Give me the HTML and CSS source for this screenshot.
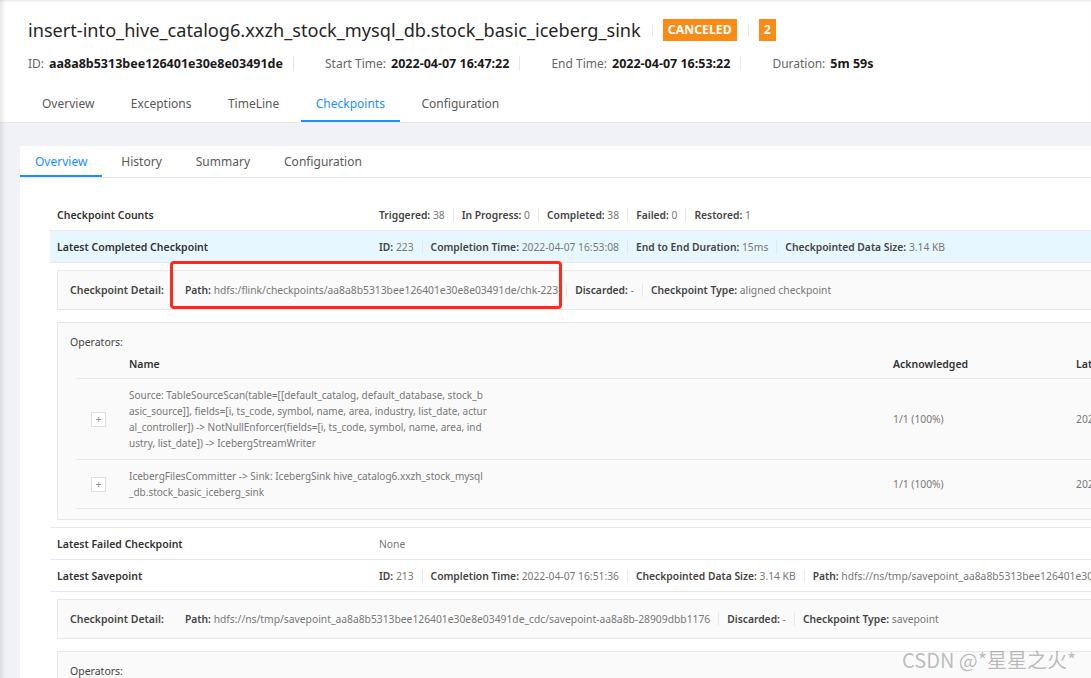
FILE: index.html
```html
<!DOCTYPE html>
<html lang="en">
<head>
    <meta charset="UTF-8">
    <title>Flink Job - Checkpoints</title>
    <link rel="stylesheet" href="styles.css">
</head>
<body>

<div class="layout">
    <header class="job-header">
        <div class="job-title">
            <h1>insert-into_hive_catalog6.xxzh_stock_mysql_db.stock_basic_iceberg_sink</h1>
            <span class="title-sep"></span>
            <span class="badge">CANCELED</span>
            <span class="title-sep"></span>
            <span class="badge">2</span>
        </div>
        <div class="job-meta">
            <div class="meta-item"><span class="meta-label">ID:</span><span class="meta-value">aa8a8b5313bee126401e30e8e03491de</span></div>
            <span class="meta-sep"></span>
            <div class="meta-item"><span class="meta-label">Start Time:</span><span class="meta-value">2022-04-07 16:47:22</span></div>
            <span class="meta-sep"></span>
            <div class="meta-item"><span class="meta-label">End Time:</span><span class="meta-value">2022-04-07 16:53:22</span></div>
            <span class="meta-sep"></span>
            <div class="meta-item"><span class="meta-label">Duration:</span><span class="meta-value">5m 59s</span></div>
        </div>
        <nav class="tabs">
            <a class="tab">Overview</a>
            <a class="tab">Exceptions</a>
            <a class="tab">TimeLine</a>
            <a class="tab active">Checkpoints</a>
            <a class="tab">Configuration</a>
        </nav>
    </header>

    <main class="content">
        <section class="card">
            <nav class="sub-tabs">
                <a class="sub-tab active">Overview</a>
                <a class="sub-tab">History</a>
                <a class="sub-tab">Summary</a>
                <a class="sub-tab">Configuration</a>
            </nav>

            <div class="card-body">
                <div class="row">
                    <div class="row-label">Checkpoint Counts</div>
                    <div class="row-value">
                        <b>Triggered:</b>&nbsp;38<span class="divider"></span>
                        <b>In Progress:</b>&nbsp;0<span class="divider"></span>
                        <b>Completed:</b>&nbsp;38<span class="divider"></span>
                        <b>Failed:</b>&nbsp;0<span class="divider"></span>
                        <b>Restored:</b>&nbsp;1
                    </div>
                </div>
                <div class="row highlight">
                    <div class="row-label">Latest Completed Checkpoint</div>
                    <div class="row-value">
                        <b>ID:</b>&nbsp;223<span class="divider"></span>
                        <b>Completion Time:</b>&nbsp;2022-04-07 16:53:08<span class="divider"></span>
                        <b>End to End Duration:</b>&nbsp;15ms<span class="divider"></span>
                        <b>Checkpointed Data Size:</b>&nbsp;3.14 KB
                    </div>
                </div>
                <div class="row expanded">
                    <div class="detail-box">
                        <span class="detail-label">Checkpoint Detail:</span>
                        <b>Path:</b>&nbsp;hdfs:/flink/checkpoints/aa8a8b5313bee126401e30e8e03491de/chk-223<span class="divider"></span>
                        <b>Discarded:</b>&nbsp;-<span class="divider"></span>
                        <b>Checkpoint Type:</b>&nbsp;aligned checkpoint
                    </div>
                    <div class="operators-box">
                        <div class="operators-title">Operators:</div>
                        <div class="op-table">
                            <div class="op-head"></div>
                            <div class="op-head">Name</div>
                            <div class="op-head">Acknowledged</div>
                            <div class="op-head">Latest Acknowledgement</div>

                            <div class="op-cell op-expand"><span class="plus">+</span></div>
                            <div class="op-cell op-name">Source: TableSourceScan(table=[[default_catalog, default_database, stock_b<br>asic_source]], fields=[i, ts_code, symbol, name, area, industry, list_date, actur<br>al_controller]) -&gt; NotNullEnforcer(fields=[i, ts_code, symbol, name, area, ind<br>ustry, list_date]) -&gt; IcebergStreamWriter</div>
                            <div class="op-cell">1/1 (100%)</div>
                            <div class="op-cell">2022-04-07 16:53:08</div>

                            <div class="op-cell op-expand"><span class="plus">+</span></div>
                            <div class="op-cell op-name">IcebergFilesCommitter -&gt; Sink: IcebergSink hive_catalog6.xxzh_stock_mysql<br>_db.stock_basic_iceberg_sink</div>
                            <div class="op-cell">1/1 (100%)</div>
                            <div class="op-cell">2022-04-07 16:53:08</div>
                        </div>
                    </div>
                </div>
                <div class="row">
                    <div class="row-label">Latest Failed Checkpoint</div>
                    <div class="row-value">None</div>
                </div>
                <div class="row">
                    <div class="row-label">Latest Savepoint</div>
                    <div class="row-value">
                        <b>ID:</b>&nbsp;213<span class="divider"></span>
                        <b>Completion Time:</b>&nbsp;2022-04-07 16:51:36<span class="divider"></span>
                        <b>Checkpointed Data Size:</b>&nbsp;3.14 KB<span class="divider"></span>
                        <b>Path:</b>&nbsp;hdfs://ns/tmp/savepoint_aa8a8b5313bee126401e30e8e03491de_cdc/savepoint-aa8a8b-28909dbb1176
                    </div>
                </div>
                <div class="row expanded">
                    <div class="detail-box">
                        <span class="detail-label">Checkpoint Detail:</span>
                        <b>Path:</b>&nbsp;hdfs://ns/tmp/savepoint_aa8a8b5313bee126401e30e8e03491de_cdc/savepoint-aa8a8b-28909dbb1176<span class="divider"></span>
                        <b>Discarded:</b>&nbsp;-<span class="divider"></span>
                        <b>Checkpoint Type:</b>&nbsp;savepoint
                    </div>
                    <div class="operators-box">
                        <div class="operators-title">Operators:</div>
                    </div>
                </div>
            </div>
        </section>
    </main>

    <div class="annotation"></div>
    <div class="watermark">CSDN @*星星之火*</div>
</div>

</body>
</html>
```

FILE: styles.css
```css
html, body {
    margin: 0;
    height: 100%;
    overflow: hidden;
}
body {
    font-family: 'Noto Sans', 'Noto Sans CJK SC', sans-serif;
    background-color: #f0f2f5;
    color: #595959;
}
.layout {
    position: relative;
    min-height: 100%;
}
.layout::before {
    content: "";
    position: absolute;
    left: 0;
    top: 0;
    bottom: 0;
    width: 6px;
    background: linear-gradient(to right, rgba(0, 0, 0, 0.09), rgba(0, 0, 0, 0));
    z-index: 5;
}

/* job header */
.job-header {
    background-color: #fff;
    padding: 16px 28px 0;
    box-shadow: inset 0 3px 3px -2px rgba(0, 0, 0, 0.1);
    border-bottom: 1px solid #e8e8e8;
}
.job-title {
    display: flex;
    align-items: center;
    height: 28px;
}
.job-title h1 {
    margin: 0;
    font-size: 18.15px;
    font-weight: 400;
    color: #262626;
    white-space: nowrap;
}
.title-sep {
    width: 1px;
    height: 12px;
    background-color: #e8e8e8;
    margin: 0 10px 0 11px;
}
.badge {
    background-color: #fa8c16;
    color: #fff;
    font-size: 12.3px;
    font-weight: 700;
    line-height: 22px;
    padding: 0 5px;
}
.job-meta {
    display: flex;
    align-items: center;
    height: 20px;
    margin-top: 9px;
    font-size: 12px;
}
.meta-label {
    color: #666;
    margin-right: 5px;
}
.meta-value {
    color: #1a1a1a;
    font-weight: 700;
    font-size: 12.5px;
}
.meta-sep {
    width: 1px;
    height: 15px;
    background-color: #e8e8e8;
    margin: 0 31px 0 10px;
}
.tabs {
    display: flex;
    height: 40px;
    margin-top: 9px;
    margin-left: -1px;
}
.tab {
    padding: 3px 15px 0;
    margin-right: 6.5px;
    line-height: 37px;
    font-size: 12px;
    color: #595959;
    border-bottom: 2px solid transparent;
    box-sizing: border-box;
}
.tab.active {
    color: #1890ff;
    border-bottom-color: #1890ff;
}

/* checkpoints card */
.content {
    padding: 23px 0 0 20px;
}
.card {
    width: 1300px;
    background-color: #fff;
}
.sub-tabs {
    display: flex;
    height: 32px;
    border-bottom: 1px solid #e8e8e8;
    box-sizing: border-box;
}
.sub-tab {
    padding: 1px 15px 0;
    margin-right: 4px;
    line-height: 30px;
    font-size: 12px;
    color: #595959;
    border-bottom: 2px solid transparent;
}
.sub-tab.active {
    color: #1890ff;
    border-bottom-color: #1890ff;
}
.card-body {
    padding: 21px 0 0 30px;
    font-size: 10.3px;
}
.row {
    display: flex;
    align-items: center;
    height: 31px;
    border-bottom: 1px solid #e8e8e8;
    white-space: nowrap;
}
.row.highlight {
    background-color: #e6f7ff;
}
.row-label {
    flex-shrink: 0;
    width: 322px;
    padding-left: 7px;
    color: #333;
    font-weight: 600;
    font-size: 10.5px;
}
.row-value {
    display: flex;
    align-items: center;
    color: #777;
}
b {
    color: #444;
    font-weight: 600;
}
.divider {
    display: inline-block;
    width: 1px;
    height: 14px;
    background-color: #e8e8e8;
    margin: 0 8px;
}
.row.expanded {
    display: block;
    height: auto;
    padding: 7px 0 7px 7px;
}
.detail-box {
    display: flex;
    align-items: center;
    height: 40px;
    padding: 0 12px;
    background-color: #fafafa;
    border: 1px solid #e8e8e8;
    box-sizing: border-box;
    color: #777;
}
.detail-label {
    width: 115px;
    color: #444;
    font-weight: 600;
    font-size: 10.5px;
}
.operators-box {
    margin-top: 12px;
    padding: 11px 0 10px 12px;
    background-color: #fafafa;
    border: 1px solid #e8e8e8;
}
.operators-title {
    color: #444;
    line-height: 16px;
    font-size: 10.5px;
}
.op-table {
    display: grid;
    grid-template-columns: 45px 764px 183px 200px;
    margin-left: 6px;
}
.op-head {
    height: 28px;
    line-height: 28px;
    padding-left: 8px;
    color: #333;
    font-weight: 600;
    font-size: 10.5px;
    border-bottom: 1px solid #e8e8e8;
}
.op-head:first-child {
    padding: 0;
}
.op-cell {
    display: flex;
    align-items: center;
    padding: 8px;
    line-height: 16px;
    color: #777;
    border-bottom: 1px solid #e8e8e8;
}
.op-expand {
    justify-content: center;
    padding: 0;
}
.op-name {
    display: block;
    white-space: nowrap;
    font-size: 10px;
}
.plus {
    display: inline-block;
    width: 13px;
    height: 13px;
    line-height: 12px;
    text-align: center;
    border: 1px solid #e0e0e0;
    background-color: #fff;
    font-size: 10px;
    color: #888;
}

/* overlays */
.annotation {
    position: absolute;
    left: 170px;
    top: 261px;
    width: 386px;
    height: 42px;
    border: 3px solid #ff2a1a;
    border-radius: 4px;
}
.watermark {
    position: absolute;
    left: 902px;
    top: 645px;
    font-family: 'Noto Sans CJK SC', sans-serif;
    font-size: 20px;
    color: rgba(0, 0, 0, 0.27);
    white-space: nowrap;
}
```
